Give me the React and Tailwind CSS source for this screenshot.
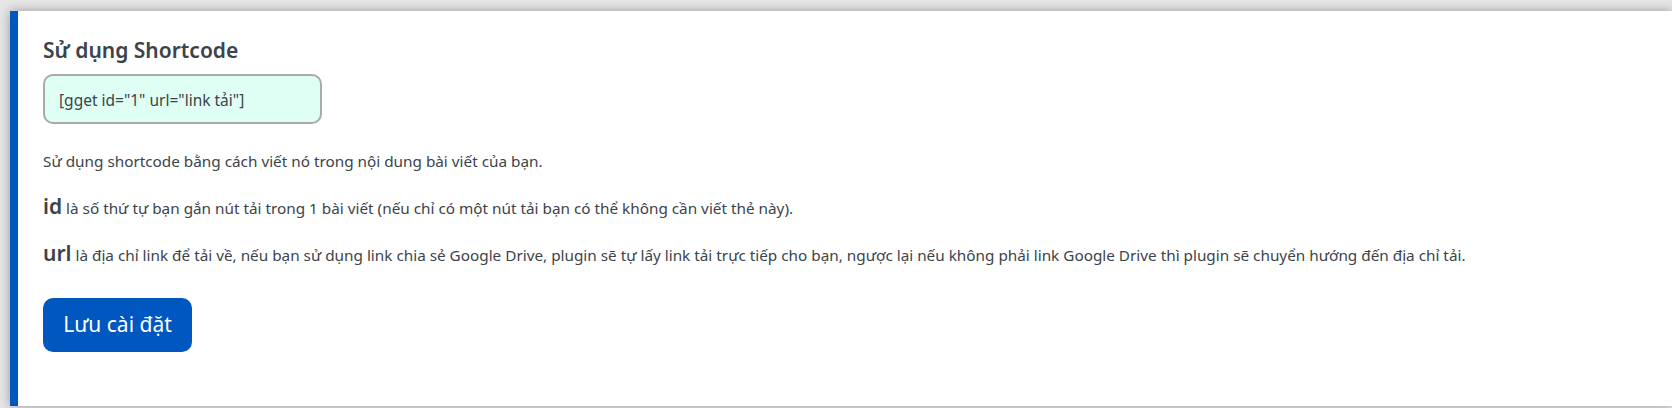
import React from "react";

const font = { fontFamily: '"Noto Sans", "Open Sans", sans-serif' };

function App() {
    return (
        <div className="w-[1672px] h-[408px] bg-[#e6e6e6] pt-[11px] pl-[10px] overflow-hidden" style={font}>
            <div className="h-[395px] bg-white border-l-[8px] border-[#0057c0] shadow-[0_0_10px_rgba(0,0,0,0.35)] pl-[25px] pt-[26px] text-[#3c434a]">
                <h2 className="text-[21px] leading-[26px] font-semibold">Sử dụng Shortcode</h2>

                <input
                    className="mt-[11px] w-[279px] h-[50px] px-[14px] pt-[2px] rounded-[10px] border-2 border-[#aaaaaa] bg-[#e0fff4] text-[15.5px] text-[#3c434a] outline-none"
                    defaultValue='[gget id="1" url="link tải"]'
                    readOnly
                />

                <p className="mt-[26px] text-[15.3px] leading-[22px]">
                    Sử dụng shortcode bằng cách viết nó trong nội dung bài viết của bạn.
                </p>

                <p className="mt-[20px] text-[15.3px] leading-[28px]">
                    <span className="text-[21px] font-semibold">id</span> là số thứ tự bạn gắn nút tải trong 1 bài viết (nếu chỉ có một nút tải bạn có thể không cần viết thẻ này).
                </p>

                <p className="mt-[17px] text-[15.3px] leading-[28px]">
                    <span className="text-[21px] font-semibold">url</span> là địa chỉ link để tải về, nếu bạn sử dụng link chia sẻ Google Drive, plugin sẽ tự lấy link tải trực tiếp cho bạn, ngược lại nếu không phải link Google Drive thì plugin sẽ chuyển hướng đến địa chỉ tải.
                </p>

                <button className="mt-[29px] w-[149px] h-[54px] rounded-[10px] bg-[#0057c0] text-white text-[21px]">
                    Lưu cài đặt
                </button>
            </div>
        </div>
    );
}

export default App;
